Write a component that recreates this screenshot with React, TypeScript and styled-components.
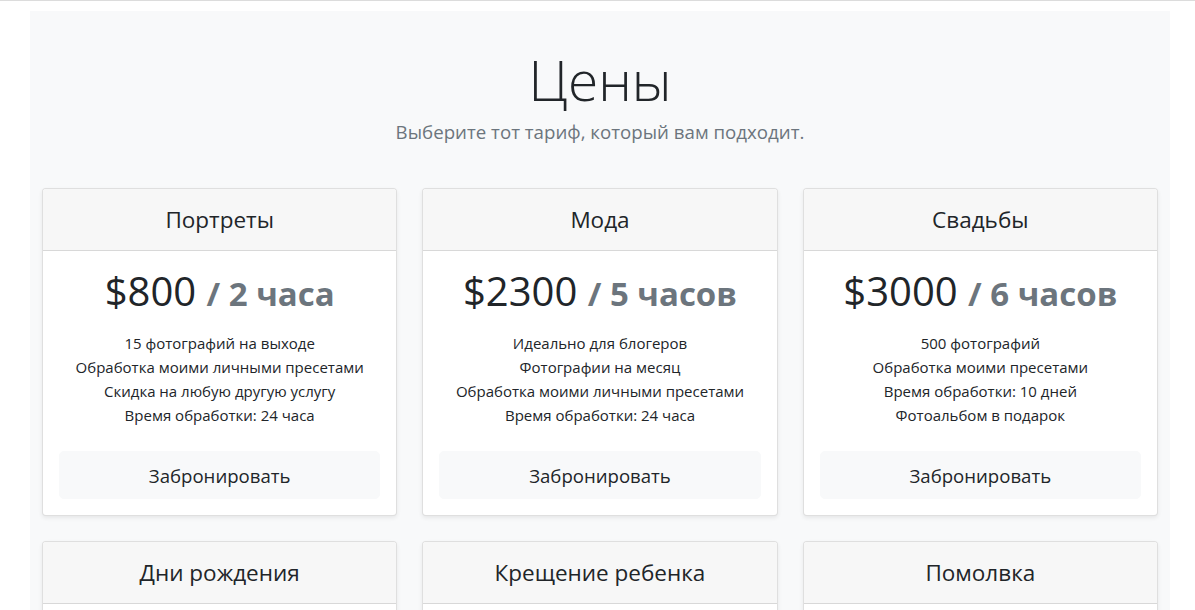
import React from "react";
import styled, { createGlobalStyle } from "styled-components";

const GlobalStyle = createGlobalStyle`
  html, body { margin: 0; padding: 0; background: #fff; }
  body {
    font-family: "Open Sans", "Noto Sans", sans-serif;
    color: #212529;
    -webkit-font-smoothing: antialiased;
  }
  * { box-sizing: border-box; }
`;

const Page = styled.div`
  border-top: 1px solid #dcdcdc;
  padding-top: 10px;
`;

const Container = styled.main`
  width: 1140px;
  margin-left: 30px;
  background: #f8f9fa;
  padding: 0 12px 40px 12px;
`;

const Hero = styled.header`
  display: flex;
  flex-direction: column;
  align-items: center;
  padding-top: 36px;
  height: 177px;
`;

const Title = styled.h1`
  margin: 0;
  font-size: 55px;
  font-weight: 300;
  line-height: 66px;
  color: #212529;
`;

const Lead = styled.p`
  margin: 5px 0 0;
  font-size: 18.7px;
  font-weight: 400;
  line-height: 28px;
  color: #6c757d;
`;

const Grid = styled.div`
  display: grid;
  grid-template-columns: repeat(3, 1fr);
  column-gap: 25px;
  row-gap: 25px;
`;

const Card = styled.section`
  background: #fff;
  border: 1px solid rgba(0, 0, 0, 0.125);
  border-radius: 4px;
  box-shadow: 0 2px 4px rgba(0, 0, 0, 0.075);
  overflow: hidden;
  display: flex;
  flex-direction: column;
`;

const CardHeader = styled.div`
  background: #f7f7f7;
  border-bottom: 1px solid rgba(0, 0, 0, 0.125);
  height: 62px;
  display: flex;
  align-items: center;
  justify-content: center;
`;

const CardTitle = styled.h4`
  margin: 0;
  font-size: 22.5px;
  font-weight: 400;
  color: #212529;
`;

const CardBody = styled.div`
  padding: 16px;
  display: flex;
  flex-direction: column;
  align-items: center;
`;

const Price = styled.h2`
  margin: 0;
  height: 48px;
  font-size: 40px;
  font-weight: 400;
  line-height: 48px;
  color: #212529;
  white-space: nowrap;
`;

const Per = styled.small`
  font-size: 33px;
  font-weight: 700;
  line-height: 1;
  color: #6c757d;
`;

const Features = styled.ul`
  list-style: none;
  margin: 16px 0 24px;
  padding: 0;
  text-align: center;
  font-size: 15px;
  line-height: 24px;
  color: #212529;
`;

const BookButton = styled.button`
  width: 100%;
  height: 48px;
  border: 1px solid #f8f9fa;
  border-radius: 5px;
  background: #f8f9fa;
  color: #212529;
  font-family: inherit;
  font-size: 18.6px;
  font-weight: 400;
  cursor: pointer;
`;

type Plan = {
  title: string;
  price: string;
  per: string;
  features: string[];
};

const plans: Plan[] = [
  {
    title: "Портреты",
    price: "$800",
    per: "/ 2 часа",
    features: [
      "15 фотографий на выходе",
      "Обработка моими личными пресетами",
      "Скидка на любую другую услугу",
      "Время обработки: 24 часа",
    ],
  },
  {
    title: "Мода",
    price: "$2300",
    per: "/ 5 часов",
    features: [
      "Идеально для блогеров",
      "Фотографии на месяц",
      "Обработка моими личными пресетами",
      "Время обработки: 24 часа",
    ],
  },
  {
    title: "Свадьбы",
    price: "$3000",
    per: "/ 6 часов",
    features: [
      "500 фотографий",
      "Обработка моими пресетами",
      "Время обработки: 10 дней",
      "Фотоальбом в подарок",
    ],
  },
  {
    title: "Дни рождения",
    price: "$1000",
    per: "/ 3 часа",
    features: [
      "100 фотографий",
      "Обработка моими пресетами",
      "Время обработки: 5 дней",
      "Скидка на следующую съемку",
    ],
  },
  {
    title: "Крещение ребенка",
    price: "$900",
    per: "/ 2 часа",
    features: [
      "50 фотографий",
      "Обработка моими пресетами",
      "Время обработки: 5 дней",
      "Печать 10 фотографий",
    ],
  },
  {
    title: "Помолвка",
    price: "$1200",
    per: "/ 3 часа",
    features: [
      "80 фотографий",
      "Обработка моими пресетами",
      "Время обработки: 7 дней",
      "Скидка на свадебную съемку",
    ],
  },
];

export default function App() {
  return (
    <>
      <GlobalStyle />
      <Page>
        <Container>
          <Hero>
            <Title>Цены</Title>
            <Lead>Выберите тот тариф, который вам подходит.</Lead>
          </Hero>
          <Grid>
            {plans.map((p) => (
              <Card key={p.title}>
                <CardHeader>
                  <CardTitle>{p.title}</CardTitle>
                </CardHeader>
                <CardBody>
                  <Price>
                    {p.price} <Per>{p.per}</Per>
                  </Price>
                  <Features>
                    {p.features.map((f) => (
                      <li key={f}>{f}</li>
                    ))}
                  </Features>
                  <BookButton type="button">Забронировать</BookButton>
                </CardBody>
              </Card>
            ))}
          </Grid>
        </Container>
      </Page>
    </>
  );
}
